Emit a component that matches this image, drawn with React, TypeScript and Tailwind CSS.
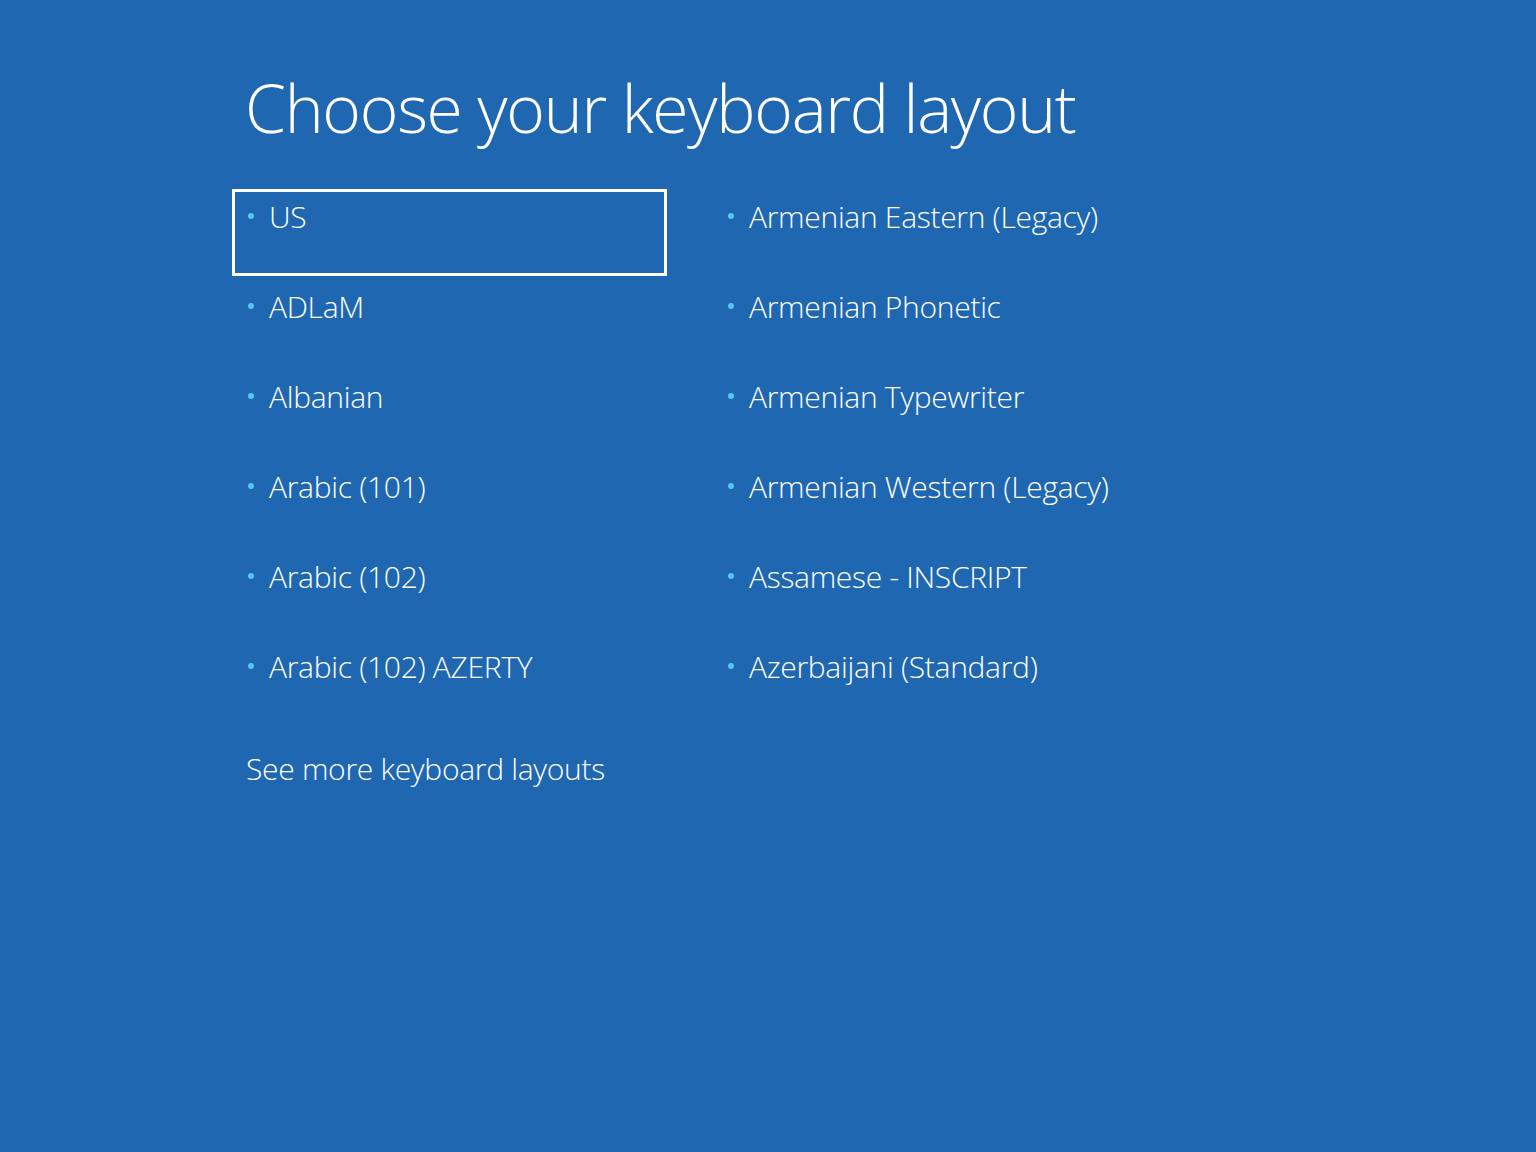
const leftLayouts = ["US", "ADLaM", "Albanian", "Arabic (101)", "Arabic (102)", "Arabic (102) AZERTY"];
const rightLayouts = [
  "Armenian Eastern (Legacy)",
  "Armenian Phonetic",
  "Armenian Typewriter",
  "Armenian Western (Legacy)",
  "Assamese - INSCRIPT",
  "Azerbaijani (Standard)",
];

const LayoutTile = ({ name, selected }: { name: string; selected?: boolean }) => (
  <div
    className={`h-[87px] w-[435px] border-[3px] flex items-start pt-[5px] ${
      selected ? "border-white" : "border-transparent"
    }`}
  >
    <span className="mt-[16px] ml-[13px] w-[6px] h-[6px] rounded-full bg-[#53c6f2] shrink-0" />
    <span className="ml-[15px] text-[30px] leading-[40px] tracking-[-0.3px] font-light text-white">{name}</span>
  </div>
);

export default function App() {
  const rows = leftLayouts.map((l, i) => [l, rightLayouts[i]]);

  return (
    <div className="w-[1536px] h-[1152px] bg-[#2067b2] font-['Open_Sans',sans-serif] overflow-hidden">
      <div className="pl-[232px] pt-[67px]">
        <h1 className="ml-[13px] text-[66px] leading-[80px] tracking-[-1.3px] font-light text-white">
          Choose your keyboard layout
        </h1>

        {/* layouts grid */}
        <div className="mt-[42px] grid grid-cols-[435px_435px] gap-x-[45px] gap-y-[3px]">
          {rows.map(([l, r], i) => (
            <div key={i} className="contents">
              <LayoutTile name={l} selected={i === 0} />
              <LayoutTile name={r} />
            </div>
          ))}
        </div>

        <button className="mt-[23px] ml-[14px] text-[30px] leading-[40px] tracking-[-0.3px] font-light text-white">
          See more keyboard layouts
        </button>
      </div>
    </div>
  );
}
